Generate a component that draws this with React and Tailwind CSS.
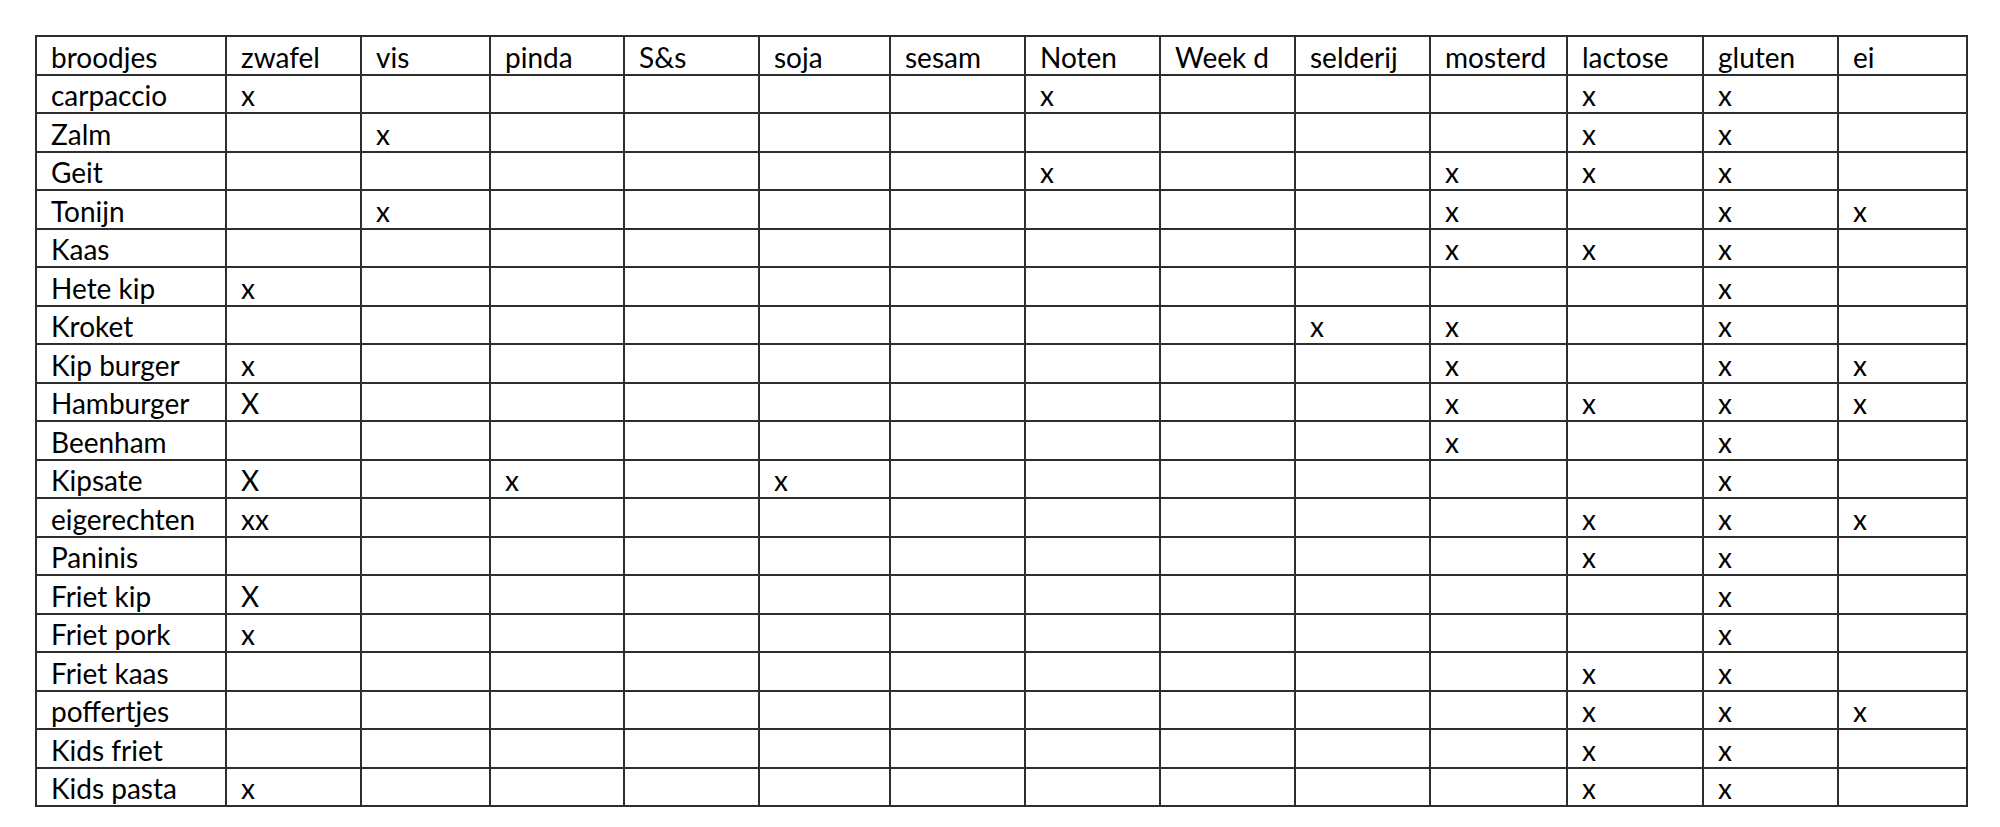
const headers = [
  "broodjes", "zwafel", "vis", "pinda", "S&s", "soja", "sesam", "Noten",
  "Week d", "selderij", "mosterd", "lactose", "gluten", "ei",
];

const widths = [190, 135, 129, 134, 135, 131, 135, 135, 135, 135, 137, 136, 135, 129];

// marks per row, keyed by column name
const rows = [
  ["carpaccio", { zwafel: "x", Noten: "x", lactose: "x", gluten: "x" }],
  ["Zalm", { vis: "x", lactose: "x", gluten: "x" }],
  ["Geit", { Noten: "x", mosterd: "x", lactose: "x", gluten: "x" }],
  ["Tonijn", { vis: "x", mosterd: "x", gluten: "x", ei: "x" }],
  ["Kaas", { mosterd: "x", lactose: "x", gluten: "x" }],
  ["Hete kip", { zwafel: "x", gluten: "x" }],
  ["Kroket", { selderij: "x", mosterd: "x", gluten: "x" }],
  ["Kip burger", { zwafel: "x", mosterd: "x", gluten: "x", ei: "x" }],
  ["Hamburger", { zwafel: "X", mosterd: "x", lactose: "x", gluten: "x", ei: "x" }],
  ["Beenham", { mosterd: "x", gluten: "x" }],
  ["Kipsate", { zwafel: "X", pinda: "x", soja: "x", gluten: "x" }],
  ["eigerechten", { zwafel: "xx", lactose: "x", gluten: "x", ei: "x" }],
  ["Paninis", { lactose: "x", gluten: "x" }],
  ["Friet kip", { zwafel: "X", gluten: "x" }],
  ["Friet pork", { zwafel: "x", gluten: "x" }],
  ["Friet kaas", { lactose: "x", gluten: "x" }],
  ["poffertjes", { lactose: "x", gluten: "x", ei: "x" }],
  ["Kids friet", { lactose: "x", gluten: "x" }],
  ["Kids pasta", { zwafel: "x", lactose: "x", gluten: "x" }],
];

const cell =
  "h-[38.5px] border-2 border-[#2e2e2e] pl-[14px] pr-1 pt-[3px] align-middle text-left font-normal whitespace-nowrap overflow-hidden";

export default function App() {
  return (
    <div className="w-[2000px] h-[827px] bg-white pl-[35px] pt-[35px] text-black text-[28px] leading-none [font-family:Lato,'Liberation_Sans',sans-serif]">
      <table className="table-fixed border-collapse w-[1931px]">
        <colgroup>
          {widths.map((w, i) => (
            <col key={i} style={{ width: w }} />
          ))}
        </colgroup>
        <thead>
          <tr>
            {headers.map((h) => (
              <th key={h} className={cell}>
                {h}
              </th>
            ))}
          </tr>
        </thead>
        <tbody>
          {rows.map(([name, marks]) => (
            <tr key={name}>
              <td className={cell}>{name}</td>
              {headers.slice(1).map((h) => (
                <td key={h} className={cell}>
                  {marks[h] || ""}
                </td>
              ))}
            </tr>
          ))}
        </tbody>
      </table>
    </div>
  );
}
